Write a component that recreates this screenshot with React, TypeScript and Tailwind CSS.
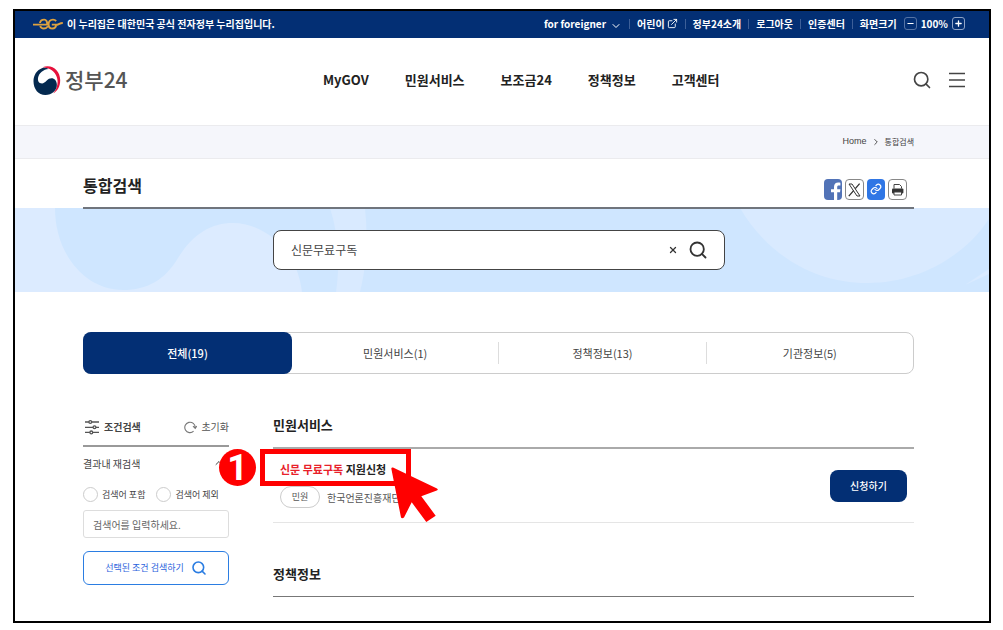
import React from "react";
import { ChevronDown, ChevronUp, ChevronRight, ExternalLink, Minus, Plus, Search, X } from "lucide-react";

const navItems = ["MyGOV", "민원서비스", "보조금24", "정책정보", "고객센터"];
const utilityLinks = ["정부24소개", "로그아웃", "인증센터"];
const tabs = ["전체(19)", "민원서비스(1)", "정책정보(13)", "기관정보(5)"];

function EgMark() {
  return (
    <svg className="h-3 w-[30px] shrink-0" viewBox="0 0 30 12" fill="none" stroke="#dfa23f" strokeWidth="1.9" aria-hidden="true">
      <path d="M0 6.6H14.2C14.4 3.4 13.2 1.6 11.2 1.6C8.8 1.6 7.2 3.2 7 5M7.2 8C7.8 9.8 9 10.5 10.8 10.5C12.5 10.5 13.8 9.8 15 8.2" />
      <path d="M23.2 3C22.2 2 21.2 1.6 20 1.6C17.2 1.6 15.6 3.8 15.6 6.2C15.6 8.8 17.2 10.5 19.4 10.5C21.6 10.5 23 9 23.2 6.6H18.8M23 7C25.4 7 26.4 5 29.8 5" />
    </svg>
  );
}

function Emblem() {
  return (
    <svg className="h-[29px] w-7 shrink-0" viewBox="0 0 84 88" aria-hidden="true">
      <path fill="#e6113c" d="M28 4C56 -8 83 13 82 44C82 62 73 77 61 83C74 68 79 45 69 27C60 12 45 5 28 4Z" />
      <path fill="#04294f" d="M28 6C11 12 1 28 1 46C1 70 16 88 37 88C57 88 72 75 72 57C72 42 60 33 48 39C39 44 36 53 27 53C17 53 13 45 15 35C18 21 31 10 47 9C41 5 34 4 28 6Z" />
    </svg>
  );
}

function Waves() {
  return (
    <svg className="absolute inset-0 h-full w-full" viewBox="0 0 974 84" preserveAspectRatio="none" aria-hidden="true">
      <rect width="974" height="84" fill="#dcebff" />
      <path fill="#cfe6ff" d="M40 0C40 46 70 82 108 82C132 82 150 72 163 50C178 26 196 15 218 15C244 15 270 34 281 60C284 68 286 76 287 84H974V0Z" />
      <path fill="#d9eaff" d="M315 0C324 28 325 56 321 84H345C352 56 353 28 350 0Z" />
      <path fill="#d9eaff" d="M725 0C752 46 798 75 852 75C902 75 948 50 974 11V0Z" />
      <path fill="#d9eaff" d="M950 77L974 61V66Z" />
    </svg>
  );
}

function Sliders() {
  return (
    <svg className="h-4 w-[14px]" viewBox="0 0 14 16" fill="#fff" stroke="#555" strokeWidth="1.3" aria-hidden="true">
      <path d="M0 3H14M0 8.3H14M0 13.4H14" />
      <circle cx="5.3" cy="3" r="1.4" />
      <circle cx="9.5" cy="8.3" r="1.4" />
      <circle cx="6.3" cy="13.4" r="1.4" />
    </svg>
  );
}

function Reset() {
  return (
    <svg className="h-[14px] w-[13px]" viewBox="0 0 13 14" fill="none" stroke="#777" strokeWidth="1.1" aria-hidden="true">
      <path d="M9.6 11.2A5.2 5.2 0 1 1 11.2 7.6M9 6.2L11.2 8.4L12.8 6" />
    </svg>
  );
}

function ShareButtons() {
  return (
    <div className="flex gap-[3px] pr-[7px]">
      <button aria-label="페이스북 공유" className="h-[21px] w-[18px] overflow-hidden rounded-sm bg-[#5273b7]">
        <svg viewBox="0 0 18 21" className="h-full w-full" aria-hidden="true">
          <path fill="#fff" d="M10 21V13.2H7V10.2H10V8C10 5 11.7 3.6 14.2 3.6C15.4 3.6 16 3.7 16.4 3.8V6.6H14.8C13.5 6.6 13.2 7.2 13.2 8.2V10.2H16.4L16 13.2H13.2V21Z" />
        </svg>
      </button>
      <button aria-label="X 공유" className="h-[21px] w-[19px] rounded-sm border border-[#888] bg-white">
        <svg viewBox="0 0 17 19" className="h-full w-full" fill="none" stroke="#333" aria-hidden="true">
          <path strokeWidth="1" d="M3 4H6L14 16H11Z" />
          <path strokeWidth="1.3" d="M13.6 3.6L9.3 8.6M7.6 10.6L2.8 16.2" />
        </svg>
      </button>
      <button aria-label="링크 복사" className="flex h-[21px] w-[18px] items-center justify-center rounded-sm bg-[#2f76e5] text-white">
        <svg viewBox="0 0 24 24" className="h-3 w-3" fill="none" stroke="currentColor" strokeWidth="2.4" strokeLinecap="round" aria-hidden="true">
          <path d="M10 13a5 5 0 0 0 7.5.5l3-3a5 5 0 0 0-7-7l-1.7 1.7M14 11a5 5 0 0 0-7.5-.5l-3 3a5 5 0 0 0 7 7l1.7-1.7" />
        </svg>
      </button>
      <button aria-label="인쇄" className="h-[21px] w-[19px] rounded-sm border border-[#888] bg-white">
        <svg viewBox="0 0 17 19" className="h-full w-full" aria-hidden="true">
          <path fill="none" stroke="#444" d="M5 8.5V4.5H10.5L12.5 6.5V8.5" />
          <rect x="3" y="8.6" width="11.4" height="5" rx="1" fill="#333" />
          <path fill="#fff" stroke="#444" d="M5 12H12.5V15H5Z" />
        </svg>
      </button>
    </div>
  );
}

function Separator() {
  return <span className="h-[10px] w-px bg-[#3d5f98]" />;
}

export default function App() {
  return (
    <div className="bg-white pt-[9px] pr-[12px] pb-2 pl-[13px] font-['Noto_Sans_CJK_KR','Noto_Sans',sans-serif] text-[#333]">
      <div className="border-2 border-black pb-6">
        <div className="flex h-[27px] items-center justify-between bg-[#032f74] pr-6 pb-[2px] pl-[18px] text-[10px] font-bold text-white">
          <p className="flex items-center gap-1">
            <EgMark />
            이 누리집은 대한민국 공식 전자정부 누리집입니다.
          </p>
          <div className="flex items-center gap-[7px]">
            <button className="flex items-center gap-1">
              for foreigner
              <ChevronDown className="mt-1 size-3" strokeWidth={2} />
            </button>
            <Separator />
            <a href="#kids" className="flex items-center gap-[2px]">
              어린이
              <ExternalLink className="size-[11px]" strokeWidth={2} />
            </a>
            <Separator />
            {utilityLinks.map((label) => (
              <React.Fragment key={label}>
                <a href="#utility">{label}</a>
                <Separator />
              </React.Fragment>
            ))}
            <span>화면크기</span>
            <span className="flex items-center gap-1">
              <button aria-label="축소" className="flex size-[13px] items-center justify-center rounded-[3px] border border-[#5573a5]">
                <Minus className="size-[9px]" strokeWidth={3} />
              </button>
              100%
              <button aria-label="확대" className="flex size-[13px] items-center justify-center rounded-[3px] border border-[#8ea3c6]">
                <Plus className="size-[9px]" strokeWidth={3.5} />
              </button>
            </span>
          </div>
        </div>

        <header className="flex h-[87px] items-center pr-6 pb-[3px] pl-[18px]">
          <a href="#home" className="flex w-[290px] items-center gap-1 text-[21px] font-medium text-[#555]">
            <Emblem />
            정부24
          </a>
          <nav className="flex flex-1 gap-9 text-[13px] font-bold text-[#222]">
            {navItems.map((label) => (
              <a key={label} href="#menu">
                {label}
              </a>
            ))}
          </nav>
          <div className="flex items-center gap-[17px] text-[#444]">
            <button aria-label="검색">
              <Search className="size-5" strokeWidth={2} />
            </button>
            <button aria-label="전체메뉴">
              <svg className="h-[18px] w-4" viewBox="0 0 16 18" stroke="currentColor" strokeWidth="1.5" aria-hidden="true">
                <path d="M0 2.5H16M0 9H16M0 15.5H16" />
              </svg>
            </button>
          </div>
        </header>

        <div className="flex h-[34px] items-center justify-end gap-1 border-y border-[#ebebee] bg-[#f5f6fb] pr-[75px] text-[#444]">
          <a href="#home" className="font-['Liberation_Sans',sans-serif] text-[9px]">
            Home
          </a>
          <ChevronRight className="size-[10px]" strokeWidth={2.2} />
          <span className="text-[8px]">통합검색</span>
        </div>

        <div className="relative z-10 -mb-px pr-[75px] pl-[68px]">
          <div className="flex h-[50px] items-center justify-between border-b-2 border-[#70757d] pt-3">
            <h1 className="pb-2 text-base font-bold text-[#222]">통합검색</h1>
            <ShareButtons />
          </div>
        </div>

        <div className="relative flex h-[84px] items-center pl-[258px]">
          <Waves />
          <form className="relative flex h-10 w-[452px] items-center gap-[10px] rounded-lg border border-[#444] bg-white pr-4 pl-[17px]">
            <input aria-label="검색어" defaultValue="신문무료구독" className="min-w-0 flex-1 bg-transparent text-[12px] text-[#444] outline-none" />
            <button type="button" aria-label="지우기">
              <X className="size-[10px]" strokeWidth={3} />
            </button>
            <button type="button" aria-label="검색">
              <Search className="size-5" strokeWidth={2.2} />
            </button>
          </form>
        </div>

        <div className="pt-10 pr-[75px] pl-[68px]">
          <div role="tablist" className="flex h-[42px] rounded-lg border border-[#ccc] text-[11px]">
            {tabs.map((label, i) => (
              <button
                key={label}
                role="tab"
                aria-selected={i === 0}
                className={
                  i === 0
                    ? "-my-px -ml-px w-[209px] rounded-lg bg-[#032f74] font-medium text-white"
                    : i < 3
                      ? "my-[9px] flex-1 border-r border-[#ddd] text-[#444]"
                      : "flex-1 text-[#444]"
                }
              >
                {label}
              </button>
            ))}
          </div>

          <div className="flex gap-11 pt-[34px]">
            <aside className="w-[146px] shrink-0">
              <div className="flex h-[39px] items-center justify-between border-b-2 border-[#999]">
                <h2 className="flex items-center gap-[5px] pl-[2px] text-[10px] font-bold text-[#444]">
                  <Sliders />
                  조건검색
                </h2>
                <button className="flex items-center gap-1 text-[10px] text-[#555]">
                  <Reset />
                  초기화
                </button>
              </div>
              <button className="flex h-8 w-full items-center justify-between pr-1 text-[10px] text-[#444]">
                결과내 재검색
                <ChevronUp className="size-3" strokeWidth={2} />
              </button>
              <div className="flex h-[31px] items-center gap-[11px] text-[9px] text-[#444]">
                <label className="flex items-center gap-1">
                  <input type="radio" name="scope" className="size-[15px] appearance-none rounded-full border border-[#ccc]" />
                  검색어 포함
                </label>
                <label className="flex items-center gap-1">
                  <input type="radio" name="scope" className="size-[15px] appearance-none rounded-full border border-[#ccc]" />
                  검색어 제외
                </label>
              </div>
              <input aria-label="결과내 검색어" placeholder="검색어를 입력하세요." className="block h-7 w-full rounded-[3px] border border-[#ddd] px-[9px] text-[10px] placeholder:text-[#666]" />
              <button className="mt-[13px] flex h-[34px] w-full items-center justify-center gap-[7px] rounded-md border border-[#2b7de2] text-[9px] text-[#2b62dc]">
                선택된 조건 검색하기
                <Search className="size-4 text-[#2b7de2]" strokeWidth={2.4} />
              </button>
            </aside>

            <main className="min-w-0 flex-1">
              <h2 className="flex h-[41px] items-center border-b-2 border-[#aaa] pb-[5px] text-[13px] font-bold text-[#222]">민원서비스</h2>
              <div className="relative flex h-[74px] items-center justify-between border-b border-[#e5e5e5] pr-[7px] pl-[7px]">
                <div className="flex flex-col gap-[7px] pb-1">
                  <a href="#result" className="text-[11px] leading-5 font-bold text-[#222]">
                    <span className="text-[#e8202a]">신문 무료구독</span> 지원신청
                  </a>
                  <p className="flex items-center gap-[7px] text-[10px] text-[#555]">
                    <span className="flex h-[22px] w-10 items-center justify-center rounded-full border border-[#ccc] text-[9px]">민원</span>
                    한국언론진흥재단
                  </p>
                </div>
                <button className="h-8 w-[77px] rounded-lg bg-[#032f74] text-[10px] font-medium text-white">신청하기</button>

                <div className="absolute top-0 -left-[13px] h-[37px] w-[151px] border-[5px] border-[#ff0000]" />
                <div className="absolute top-0 -left-[54px] flex size-[37px] items-center justify-center rounded-full bg-[#ff0000] font-[Roboto,sans-serif] text-[36px] leading-none font-bold text-white">
                  1
                </div>
                <svg className="absolute top-[18px] left-[118px] h-14 w-12" viewBox="0 0 48 56" fill="#ff0000" aria-hidden="true">
                  <path d="M0.3 1.5Q0.6 0.2 2 0.6L46 21.4Q47.8 22.8 45.8 23.6L30.3 29.3L44.7 48.7L35.3 55L20.7 35.3L13 50.5Q11 52 10 50.5Z" />
                </svg>
              </div>

              <h2 className="mt-8 flex h-[42px] items-center border-b border-[#777] pb-[3px] text-[13px] font-bold text-[#222]">정책정보</h2>
            </main>
          </div>
        </div>
      </div>
    </div>
  );
}
